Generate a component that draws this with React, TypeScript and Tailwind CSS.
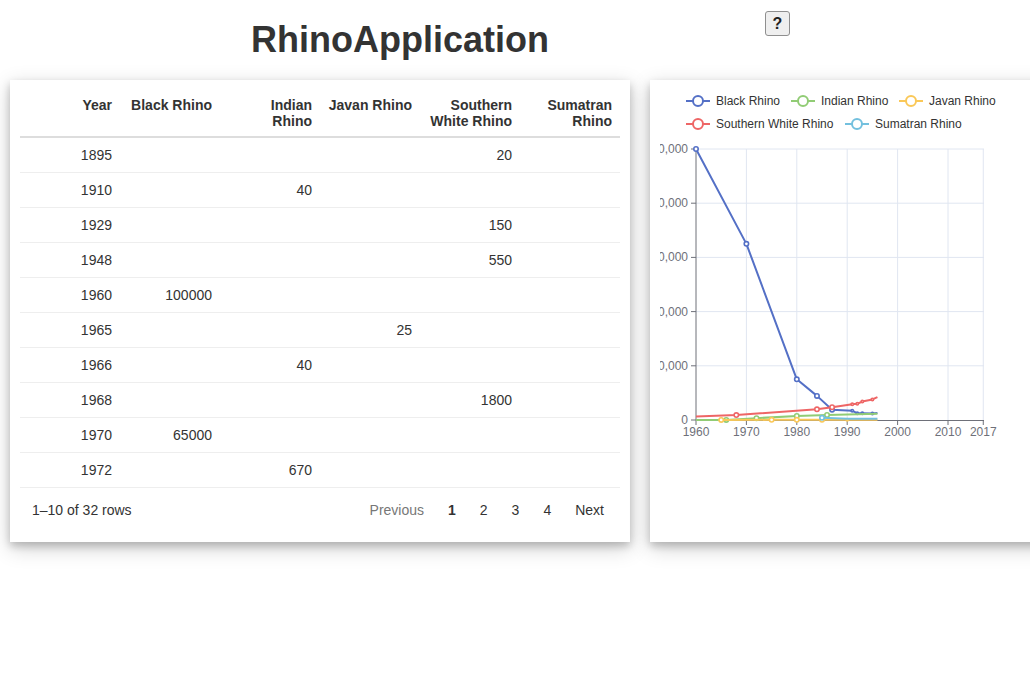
import React from "react";

type Row = {
  year: number;
  black?: number;
  indian?: number;
  javan?: number;
  white?: number;
  sumatran?: number;
};

const ROWS: Row[] = [
  { year: 1895, white: 20 },
  { year: 1910, indian: 40 },
  { year: 1929, white: 150 },
  { year: 1948, white: 550 },
  { year: 1960, black: 100000 },
  { year: 1965, javan: 25 },
  { year: 1966, indian: 40 },
  { year: 1968, white: 1800 },
  { year: 1970, black: 65000 },
  { year: 1972, indian: 670 },
];

const HEADERS = ["Year", "Black Rhino", "Indian Rhino", "Javan Rhino", "Southern White Rhino", "Sumatran Rhino"];

// chart scales, in page coordinates
const xs = (year: number) => 696 + (year - 1960) * 5.04;
const ys = (v: number) => 420 - v * 0.00271;

type Pt = [number, number, number?]; // year, value, symbol size (0 = none)

const SERIES: { name: string; color: string; points: Pt[] }[] = [
  {
    name: "Black Rhino",
    color: "#5470c6",
    points: [
      [1960, 100000, 2.2],
      [1970, 65000, 2.2],
      [1980, 15000, 2.2],
      [1984, 8900, 2.2],
      [1987, 3800, 2.2],
      [1991, 3450, 1.2],
      [1992, 2480, 1.2],
      [1993, 2480, 1.2],
      [1995, 2410, 1.2],
      [1996, 2600, 0],
    ],
  },
  {
    name: "Indian Rhino",
    color: "#91cc75",
    points: [
      [1960, 40, 0],
      [1966, 40, 2.2],
      [1972, 670, 2.2],
      [1980, 1500, 2.2],
      [1986, 1850, 2.2],
      [1996, 2330, 0],
    ],
  },
  {
    name: "Javan Rhino",
    color: "#fac858",
    points: [
      [1965, 25, 2.2],
      [1975, 50, 2.2],
      [1980, 60, 2.2],
      [1985, 50, 2.2],
      [1990, 50, 1.2],
      [1996, 60, 0],
    ],
  },
  {
    name: "Southern White Rhino",
    color: "#ee6666",
    points: [
      [1960, 1300, 0],
      [1968, 1800, 2.2],
      [1984, 3950, 2.2],
      [1987, 4700, 2.2],
      [1991, 5800, 1.2],
      [1992, 6000, 1.2],
      [1993, 6800, 1.2],
      [1995, 7600, 1.2],
      [1996, 8450, 0],
    ],
  },
  {
    name: "Sumatran Rhino",
    color: "#73c0de",
    points: [
      [1985, 800, 2.2],
      [1990, 500, 0],
      [1996, 480, 0],
    ],
  },
];

const LEGEND = [
  { name: "Black Rhino", color: "#5470c6", x: 686, y: 101 },
  { name: "Indian Rhino", color: "#91cc75", x: 791, y: 101 },
  { name: "Javan Rhino", color: "#fac858", x: 899, y: 101 },
  { name: "Southern White Rhino", color: "#ee6666", x: 686, y: 124 },
  { name: "Sumatran Rhino", color: "#73c0de", x: 845, y: 124 },
];

function Chart() {
  const yTicks = [0, 20000, 40000, 60000, 80000, 100000];
  const xTicks = [1960, 1970, 1980, 1990, 2000, 2010, 2017];
  return (
    <svg
      width={370}
      height={380}
      viewBox="660 80 370 380"
      className="ml-[10px] block"
      style={{ fontFamily: '"Liberation Sans", Arial, sans-serif' }}
    >
      {/* legend */}
      {LEGEND.map((l) => (
        <g key={l.name}>
          <line x1={l.x} x2={l.x + 24} y1={l.y} y2={l.y} stroke={l.color} strokeWidth={2} />
          <circle cx={l.x + 12} cy={l.y} r={5} fill="#fff" stroke={l.color} strokeWidth={2} />
          <text x={l.x + 30} y={l.y + 4} fontSize={12} fill="#333">
            {l.name}
          </text>
        </g>
      ))}

      {/* grid */}
      {yTicks.slice(1).map((v) => (
        <line key={v} x1={696} x2={984} y1={ys(v)} y2={ys(v)} stroke="#e0e6f1" strokeWidth={1} />
      ))}
      {xTicks.slice(1).map((y) => (
        <line key={y} x1={xs(y)} x2={xs(y)} y1={149} y2={420} stroke="#e0e6f1" strokeWidth={1} />
      ))}

      {/* axes */}
      <line x1={696} x2={696} y1={149} y2={420} stroke="#6e7079" strokeWidth={1} />
      <line x1={696} x2={984} y1={420.5} y2={420.5} stroke="#6e7079" strokeWidth={1} />
      {yTicks.map((v) => (
        <g key={v}>
          <line x1={691} x2={696} y1={ys(v)} y2={ys(v)} stroke="#6e7079" />
          <text x={688} y={ys(v) + 4} fontSize={12} fill="#6e7079" textAnchor="end">
            {v.toLocaleString("en-US")}
          </text>
        </g>
      ))}
      {xTicks.map((y) => (
        <g key={y}>
          <line x1={xs(y)} x2={xs(y)} y1={420} y2={425} stroke="#6e7079" />
          <text x={xs(y)} y={436} fontSize={12} fill="#6e7079" textAnchor="middle">
            {y}
          </text>
        </g>
      ))}

      {/* series */}
      {SERIES.map((s) => (
        <g key={s.name}>
          <polyline
            points={s.points.map((p) => `${xs(p[0])},${ys(p[1])}`).join(" ")}
            fill="none"
            stroke={s.color}
            strokeWidth={2}
            strokeLinejoin="round"
          />
          {s.points
            .filter((p) => p[2])
            .map((p) => (
              <circle
                key={p[0]}
                cx={xs(p[0])}
                cy={ys(p[1])}
                r={p[2]}
                fill="#fff"
                stroke={s.color}
                strokeWidth={1.6}
              />
            ))}
        </g>
      ))}
    </svg>
  );
}

function RhinoTable() {
  const cols: (keyof Row)[] = ["year", "black", "indian", "javan", "white", "sumatran"];
  return (
    <div className="w-[600px]">
      <table className="w-[600px] table-fixed border-collapse">
        <thead>
          <tr>
            {HEADERS.map((h) => (
              <th
                key={h}
                className="w-[100px] px-2 pt-[7px] pb-[7px] text-right align-top text-[14px] font-bold leading-4 border-b-2 border-[#dddddd]"
              >
                {h}
              </th>
            ))}
          </tr>
        </thead>
        <tbody>
          {ROWS.map((r) => (
            <tr key={r.year}>
              {cols.map((c) => (
                <td key={c} className="px-2 py-2 text-right text-[14px] leading-[18px] border-b border-[#eeeeee]">
                  {r[c] ?? ""}
                </td>
              ))}
            </tr>
          ))}
        </tbody>
      </table>
      <div className="flex h-[44px] items-center justify-between pl-3 pr-1 text-[14px]">
        <span>1–10 of 32 rows</span>
        <div className="flex items-center">
          <span className="px-3 text-[#777777]">Previous</span>
          <span className="px-3 font-bold">1</span>
          <span className="px-3">2</span>
          <span className="px-3">3</span>
          <span className="px-3">4</span>
          <span className="px-3">Next</span>
        </div>
      </div>
    </div>
  );
}

export default function App() {
  return (
    <div
      className="h-[685px] w-[1030px] overflow-hidden bg-white text-[#333333]"
      style={{ fontFamily: '"Liberation Sans", Arial, sans-serif' }}
    >
      <header className="flex items-start">
        <div className="w-[765px] pl-[35px] pt-[19px] text-center">
          <h1 className="text-[36px] font-bold leading-[41px]">RhinoApplication</h1>
        </div>
        <button className="mt-[11px] flex h-[25px] w-[25px] items-center justify-center rounded-[3px] border border-[#8f8f8f] bg-[#efefef] text-[16px] font-bold text-[#222]">
          ?
        </button>
      </header>

      <div className="mt-[20px] flex gap-[20px] pl-[10px]">
        <section className="h-[462px] w-[620px] shrink-0 bg-white p-[10px] shadow-[0_4px_8px_0_rgba(0,0,0,0.2),0_6px_20px_0_rgba(0,0,0,0.19)]">
          <RhinoTable />
        </section>
        <section className="h-[462px] w-[620px] shrink-0 bg-white shadow-[0_4px_8px_0_rgba(0,0,0,0.2),0_6px_20px_0_rgba(0,0,0,0.19)]">
          <Chart />
        </section>
      </div>
    </div>
  );
}
